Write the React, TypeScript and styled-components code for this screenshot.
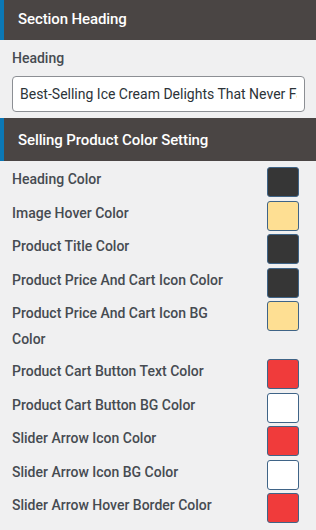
import * as React from 'react';
import styled, { createGlobalStyle } from 'styled-components';

const GlobalStyle = createGlobalStyle`
  html, body {
    margin: 0;
    padding: 0;
    background: #f0f0f1;
    font-family: Roboto, "Liberation Sans", sans-serif;
  }
  * {
    box-sizing: border-box;
  }
`;

const Panel = styled.div`
  width: 316px;
  height: 530px;
  overflow: hidden;
  background: #f0f0f1;
`;

const SectionHeader = styled.div<{ $height: number; $shift: number }>`
  height: ${p => p.$height}px;
  margin-top: ${p => p.$shift}px;
  display: flex;
  align-items: center;
  padding-left: 14px;
  background: #4a4544;
  border-left: 4px solid #0b78b6;
  color: #ffffff;
  font-size: 15px;
  font-weight: 500;
  letter-spacing: -0.1px;
`;

const Field = styled.div`
  padding: 7px 11px 6px 12px;
`;

const FieldLabel = styled.div`
  line-height: 22px;
  font-size: 14px;
  font-weight: 500;
  color: #464b51;
  margin-bottom: 7px;
`;

const TextInput = styled.input`
  display: block;
  width: 100%;
  height: 36px;
  padding: 0 7px;
  border: 1px solid #8c8f94;
  border-radius: 4px;
  background: #ffffff;
  font-family: Roboto, "Liberation Sans", sans-serif;
  font-size: 14px;
  color: #2c3338;
  outline: none;
`;

const Rows = styled.div`
  padding-top: 4px;
`;

const Row = styled.div`
  display: flex;
  justify-content: space-between;
  align-items: flex-start;
  padding: 0 17px 0 12px;
`;

const RowLabel = styled.div`
  max-width: 230px;
  padding: 1px 0 5px;
  line-height: 26px;
  font-size: 14px;
  font-weight: 500;
  color: #464b51;
`;

const Swatch = styled.div<{ $color: string }>`
  flex: none;
  width: 32px;
  height: 30px;
  margin: 2px 0 1.5px;
  border: 1px solid #3f6487;
  border-radius: 3px;
  background: ${p => p.$color};
`;

const DARK = '#363636';
const CREAM = '#fedf93';
const RED = '#f03b3b';
const WHITE = '#ffffff';

const colorSettings = [
  { label: 'Heading Color', color: DARK },
  { label: 'Image Hover Color', color: CREAM },
  { label: 'Product Title Color', color: DARK },
  { label: 'Product Price And Cart Icon Color', color: DARK },
  { label: 'Product Price And Cart Icon BG Color', color: CREAM },
  { label: 'Product Cart Button Text Color', color: RED },
  { label: 'Product Cart Button BG Color', color: WHITE },
  { label: 'Slider Arrow Icon Color', color: RED },
  { label: 'Slider Arrow Icon BG Color', color: WHITE },
  { label: 'Slider Arrow Hover Border Color', color: RED },
];

export default function App() {
  const [heading, setHeading] = React.useState(
    'Best-Selling Ice Cream Delights That Never Fail'
  );
  return (
    <Panel>
      <GlobalStyle />
      <SectionHeader $height={43} $shift={-3}>
        Section Heading
      </SectionHeader>
      <Field>
        <FieldLabel>Heading</FieldLabel>
        <TextInput
          type="text"
          value={heading}
          onChange={e => setHeading(e.target.value)}
        />
      </Field>
      <SectionHeader $height={43} $shift={0}>
        Selling Product Color Setting
      </SectionHeader>
      <Rows>
        {colorSettings.map(item => (
          <Row key={item.label}>
            <RowLabel>{item.label}</RowLabel>
            <Swatch $color={item.color} />
          </Row>
        ))}
      </Rows>
    </Panel>
  );
}
